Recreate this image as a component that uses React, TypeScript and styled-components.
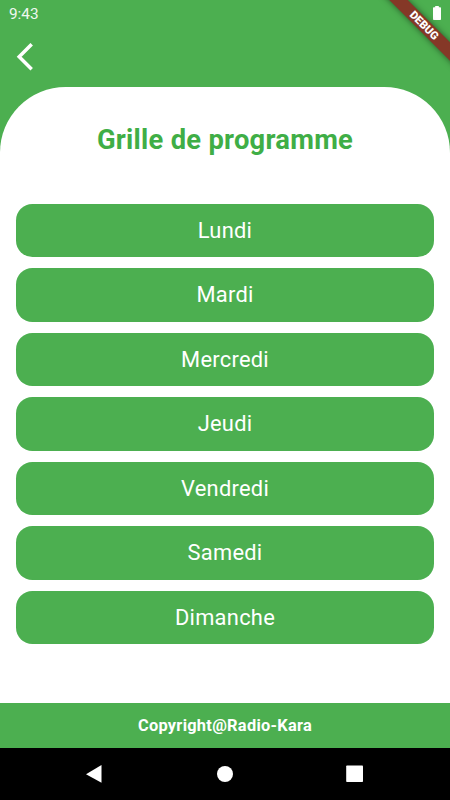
import React from "react";
import styled, { createGlobalStyle } from "styled-components";

const GREEN = "#4caf50";

const GlobalStyle = createGlobalStyle`
  * { box-sizing: border-box; }
  body { margin: 0; background: #fff; }
`;

const Screen = styled.div`
  position: relative;
  display: flex;
  flex-direction: column;
  width: 450px;
  height: 800px;
  overflow: hidden;
  background: ${GREEN};
  font-family: Roboto, sans-serif;
  color: #fff;
`;

const StatusBar = styled.div`
  display: flex;
  align-items: center;
  justify-content: space-between;
  height: 26.25px;
  padding: 1px 9px 0;
  color: #f0f8f0;
  font-size: 15.3px;
`;

const Battery = styled.svg`
  display: block;
  width: 8px;
  height: 14px;
  margin-bottom: 1.2px;
`;

const AppBar = styled.header`
  height: 60.75px;
  padding: 16.75px 0 0 16px;
`;

const BackButton = styled.button`
  display: block;
  padding: 0;
  border: 0;
  background: none;
`;

const BackIcon = styled.svg`
  display: block;
  width: 18px;
  height: 28px;
`;

const Sheet = styled.main`
  flex: 1;
  display: flex;
  flex-direction: column;
  padding: 37px 16.4px 0;
  border-radius: 65.6px 65.6px 0 0;
  background: #fff;
`;

const Title = styled.h1`
  margin: 0 0 47.5px;
  color: #3fae46;
  font-size: 27.34px;
  font-weight: 700;
  line-height: 32px;
  letter-spacing: 0.27px;
  text-align: center;
`;

const DayList = styled.nav`
  display: flex;
  flex-direction: column;
  gap: 10.94px;
`;

const DayButton = styled.button`
  height: 53.6px;
  padding: 0;
  border: 0;
  border-radius: 16.4px;
  background: ${GREEN};
  color: #fff;
  font-family: inherit;
  font-size: 21.875px;
  letter-spacing: 0.27px;
`;

const Footer = styled.footer`
  display: flex;
  align-items: center;
  justify-content: center;
  height: 45px;
  background: ${GREEN};
  font-size: 16.4px;
  font-weight: 700;
  letter-spacing: 0.27px;
`;

const SystemNav = styled.div`
  height: 52.4px;
  background: #000;
`;

const NavIcons = styled.svg`
  display: block;
  width: 450px;
  height: 52px;
`;

const DebugRibbon = styled.div`
  position: absolute;
  top: 19.4px;
  left: 364.2px;
  width: 120px;
  height: 13.2px;
  transform: rotate(45deg);
  background: #853827;
  box-shadow: 0 0 6px rgba(0, 0, 0, 0.5);
  font-size: 11.15px;
  font-weight: 900;
  line-height: 13.2px;
  text-align: center;
`;

const DAYS = ["Lundi", "Mardi", "Mercredi", "Jeudi", "Vendredi", "Samedi", "Dimanche"];

export default function App() {
  return (
    <Screen>
      <GlobalStyle />
      <StatusBar>
        <span>9:43</span>
        <Battery viewBox="0 0 8 14" fill="#fff">
          <path d="M2.2 0h3.6v1.3H7.2q.8 0 .8.8v11.1q0 .8-.8.8H.8Q0 14 0 13.2V2.1q0-.8.8-.8h1.4z" />
        </Battery>
      </StatusBar>
      <AppBar>
        <BackButton aria-label="Retour">
          <BackIcon viewBox="0 0 18 28" fill="none" stroke="#fff" strokeWidth="3.5">
            <path d="M15.7 1.2L3.2 13.7L15.7 26.2" />
          </BackIcon>
        </BackButton>
      </AppBar>
      <Sheet>
        <Title>Grille de programme</Title>
        <DayList>
          {DAYS.map((day) => (
            <DayButton key={day}>{day}</DayButton>
          ))}
        </DayList>
      </Sheet>
      <Footer>Copyright@Radio-Kara</Footer>
      <SystemNav>
        <NavIcons viewBox="0 0 450 52" fill="#fff">
          <path d="M101.5 17v17.7L86 26.2z" />
          <circle cx="225" cy="26" r="8" />
          <rect x="346.2" y="17.5" width="16.8" height="16.6" rx="0.8" />
        </NavIcons>
      </SystemNav>
      <DebugRibbon>DEBUG</DebugRibbon>
    </Screen>
  );
}
